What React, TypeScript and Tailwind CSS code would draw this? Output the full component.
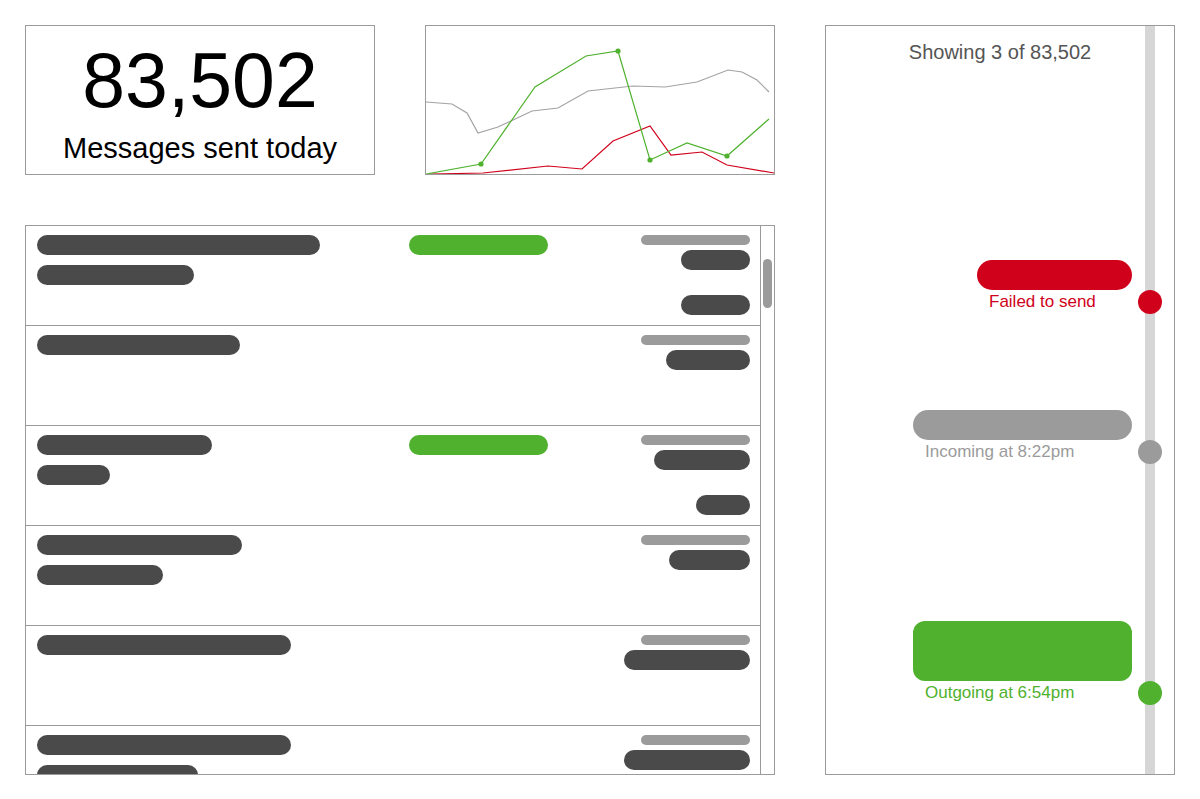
import React from "react";

const FONT = { fontFamily: '"Liberation Sans", Arial, sans-serif' };

type Row = {
  left: number[];
  badge?: boolean;
  right: number;
  extra?: number;
};

const rows: Row[] = [
  { left: [283, 157], badge: true, right: 69, extra: 69 },
  { left: [203], right: 84 },
  { left: [175, 73], badge: true, right: 96, extra: 54 },
  { left: [205, 126], right: 81 },
  { left: [254], right: 126 },
  { left: [254, 161], right: 126 },
];

function ListRow({ row }: { row: Row }) {
  return (
    <div className="flex h-[100px] shrink-0 border-b border-[#9b9b9b] pt-[9px] pl-[11px] pr-[10px]">
      <div className="flex w-[372px] flex-col gap-[10px]">
        {row.left.map((w, i) => (
          <div key={i} className="h-[20px] rounded-full bg-[#4a4a4a]" style={{ width: w }} />
        ))}
      </div>
      <div className="w-[139px]">
        {row.badge && <div className="h-[20px] w-[139px] rounded-full bg-[#4fb12e]" />}
      </div>
      <div className="flex flex-1 flex-col items-end">
        <div className="h-[10px] w-[109px] rounded-full bg-[#9b9b9b]" />
        <div className="mt-[5px] h-[20px] rounded-full bg-[#4a4a4a]" style={{ width: row.right }} />
        {row.extra && (
          <div className="mt-[25px] h-[20px] rounded-full bg-[#4a4a4a]" style={{ width: row.extra }} />
        )}
      </div>
    </div>
  );
}

function Chart() {
  const gray = "0,76 26,78 41,87 52,107 72,101 106,85 132,82 162,65 207,60 239,61 271,56 302,44 316,46 331,54 343,66";
  const green = "0,148 55,138 109,61 160,30 192,25 224,134 261,117 301,130 343,93";
  const red = "4,148 57,147 122,140 156,143 187,115 224,100 245,129 276,126 301,139 348,147";
  return (
    <svg width="348" height="148" viewBox="0 0 348 148" className="block">
      <polyline points={gray} fill="none" stroke="#a3a3a3" strokeWidth="1.2" />
      <polyline points={red} fill="none" stroke="#d0021b" strokeWidth="1.2" />
      <polyline points={green} fill="none" stroke="#4fb12e" strokeWidth="1.2" />
      {[
        [55, 138],
        [192, 25],
        [224, 134],
        [301, 130],
      ].map(([x, y], i) => (
        <circle key={i} cx={x} cy={y} r="2.6" fill="#4fb12e" />
      ))}
    </svg>
  );
}

function Message({
  width,
  height,
  rounded,
  color,
  textColor,
  label,
  dotColor,
  className,
}: {
  width: string;
  height: string;
  rounded: string;
  color: string;
  textColor: string;
  label: string;
  dotColor: string;
  className: string;
}) {
  return (
    <div className={`ml-auto mr-[13px] flex flex-col ${width} ${className}`}>
      <div className={`${height} ${rounded} ${color} w-full`} />
      <div className={`relative mt-[2px] pl-3 text-[17px] leading-[20px] ${textColor}`}>
        {label}
        <div className={`absolute right-[-30px] top-1/2 h-6 w-6 -translate-y-1/2 rounded-full ${dotColor}`} />
      </div>
    </div>
  );
}

export default function App() {
  return (
    <div className="flex h-[799px] w-[1200px] gap-[50px] bg-white p-[25px]" style={FONT}>
      <div className="flex w-[750px] flex-col gap-[50px]">
        <div className="flex h-[150px] gap-[50px]">
          <div className="flex w-[350px] flex-col items-center border border-[#9b9b9b] pt-[16px] text-black">
            <div className="text-[77px] leading-none">83,502</div>
            <div className="mt-[12px] text-[29px] leading-[34px]">Messages sent today</div>
          </div>
          <div className="w-[350px] border border-[#9b9b9b]">
            <Chart />
          </div>
        </div>
        <div className="flex h-[550px] border border-[#9b9b9b]">
          <div className="flex w-[735px] flex-col overflow-hidden border-r border-[#9b9b9b]">
            {rows.map((r, i) => (
              <ListRow key={i} row={r} />
            ))}
          </div>
          <div className="flex-1 pl-[2px] pt-[33px]">
            <div className="h-[49px] w-[9px] rounded-full bg-[#9b9b9b]" />
          </div>
        </div>
      </div>
      <div className="flex h-[750px] w-[350px] border border-[#9b9b9b]">
        <div className="flex w-[319px] flex-col">
          <div className="pl-[29px] pt-[14px] text-center text-[20px] leading-[24px] text-[#555555]">
            Showing 3 of 83,502
          </div>
          <Message
            className="mt-[196px]"
            width="w-[155px]"
            height="h-[30px]"
            rounded="rounded-full"
            color="bg-[#d0021b]"
            textColor="text-[#d0021b]"
            label="Failed to send"
            dotColor="bg-[#d0021b]"
          />
          <Message
            className="mt-[98px]"
            width="w-[219px]"
            height="h-[30px]"
            rounded="rounded-full"
            color="bg-[#9b9b9b]"
            textColor="text-[#9b9b9b]"
            label="Incoming at 8:22pm"
            dotColor="bg-[#9b9b9b]"
          />
          <Message
            className="mt-[159px]"
            width="w-[219px]"
            height="h-[60px]"
            rounded="rounded-xl"
            color="bg-[#4fb12e]"
            textColor="text-[#4fb12e]"
            label="Outgoing at 6:54pm"
            dotColor="bg-[#4fb12e]"
          />
        </div>
        <div className="w-[10px] bg-[#d6d6d6]" />
        <div className="flex-1" />
      </div>
    </div>
  );
}
